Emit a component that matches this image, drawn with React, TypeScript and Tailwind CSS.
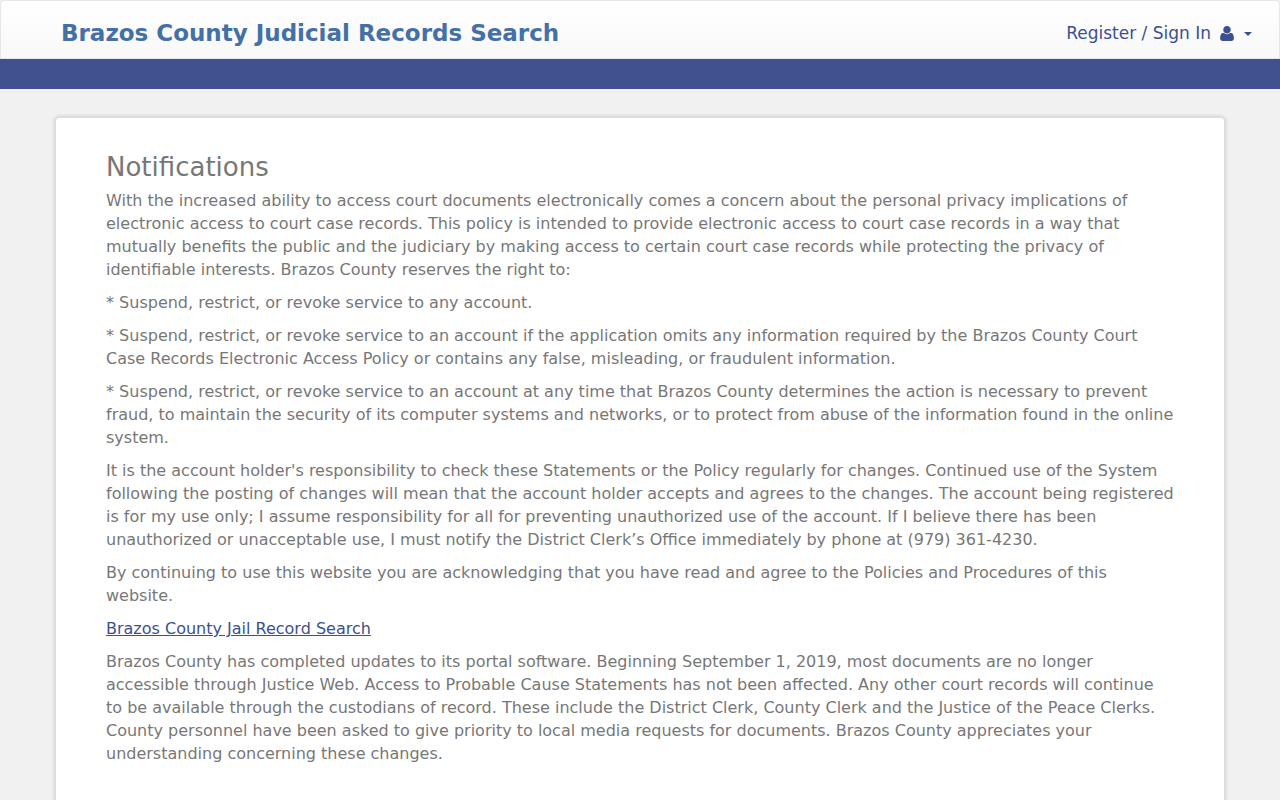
const POLICY_PARAGRAPHS = [
    'With the increased ability to access court documents electronically comes a concern about the personal privacy implications of electronic access to court case records. This policy is intended to provide electronic access to court case records in a way that mutually benefits the public and the judiciary by making access to certain court case records while protecting the privacy of identifiable interests. Brazos County reserves the right to:',
    '* Suspend, restrict, or revoke service to any account.',
    '* Suspend, restrict, or revoke service to an account if the application omits any information required by the Brazos County Court Case Records Electronic Access Policy or contains any false, misleading, or fraudulent information.',
    '* Suspend, restrict, or revoke service to an account at any time that Brazos County determines the action is necessary to prevent fraud, to maintain the security of its computer systems and networks, or to protect from abuse of the information found in the online system.',
    "It is the account holder's responsibility to check these Statements or the Policy regularly for changes. Continued use of the System following the posting of changes will mean that the account holder accepts and agrees to the changes. The account being registered is for my use only; I assume responsibility for all for preventing unauthorized use of the account. If I believe there has been unauthorized or unacceptable use, I must notify the District Clerk’s Office immediately by phone at (979) 361-4230.",
    'By continuing to use this website you are acknowledging that you have read and agree to the Policies and Procedures of this website.',
];

function UserIcon() {
    return (
        <svg viewBox="0 256 1408 1536" className="h-[15px] w-[14px]" fill="currentColor" aria-hidden="true">
            <path d="M1408 1533q0 120-73 189.500t-194 69.500h-874q-121 0-194-69.500t-73-189.500q0-53 3.500-103.500t14-109 26.500-108.500 43-97.500 62-81 85.500-53.500 111.500-20q9 0 42 21.500t74.500 48 108 48 133.500 21.500 133.500-21.500 108-48 74.500-48 42-21.500q61 0 111.500 20t85.500 53.500 62 81 43 97.500 26.500 108.500 14 109 3.500 103.500zM1088 640q0 159-112.500 271.500t-271.500 112.500-271.500-112.500-112.500-271.500 112.500-271.500 271.500-112.500 271.500 112.500 112.500 271.500z" />
        </svg>
    );
}

function Header() {
    return (
        <header>
            <div className="flex items-center justify-between rounded-t border border-[#e7e7e7] bg-linear-to-b from-white to-[#f8f8f8] pt-4 pr-[27px] pb-[9px] pl-15">
                <a href="#" className="text-[23px] leading-8 font-bold text-[#4470a6]">
                    Brazos County Judicial Records Search
                </a>
                <button type="button" className="flex cursor-pointer items-center text-[17px] leading-8 text-[#3c4f8f]">
                    Register / Sign In
                    <span className="ml-[9px]">
                        <UserIcon />
                    </span>
                    {/* caret */}
                    <span className="mt-0.5 ml-2.5 border-x-4 border-t-4 border-x-transparent border-t-current" />
                </button>
            </div>
            <div className="h-[30px] bg-[#41518f]" />
        </header>
    );
}

export default function App() {
    return (
        <div className="min-h-screen bg-[#f1f1f1] font-['DejaVu_Sans',sans-serif] text-[#777]">
            <Header />
            <main className="mx-auto mt-7 max-w-[1170px] rounded border border-[#ddd] bg-white px-[50px] pt-[35px] pb-20 shadow-[0_0_4px_rgba(0,0,0,0.2)]">
                <h1 className="mb-2 text-[26px] leading-7">Notifications</h1>
                <div className="space-y-2.5 text-base leading-[23px]">
                    {POLICY_PARAGRAPHS.map((text) => (
                        <p key={text}>{text}</p>
                    ))}
                    <p>
                        <a href="#" className="text-[#3c4f8f] underline">
                            Brazos County Jail Record Search
                        </a>
                    </p>
                    <p>
                        Brazos County has completed updates to its portal software. Beginning September 1, 2019, most
                        documents are no longer accessible through Justice Web. Access to Probable Cause Statements has
                        not been affected. Any other court records will continue to be available through the custodians
                        of record. These include the District Clerk, County Clerk and the Justice of the Peace Clerks.
                        County personnel have been asked to give priority to local media requests for documents. Brazos
                        County appreciates your understanding concerning these changes.
                    </p>
                </div>
            </main>
        </div>
    );
}
